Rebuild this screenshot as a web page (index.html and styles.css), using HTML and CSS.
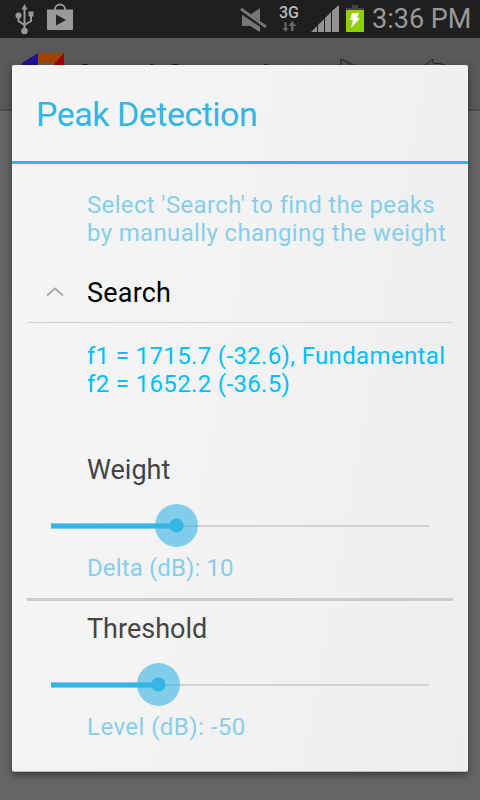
FILE: index.html
```
<!DOCTYPE html>
<html lang="en">
<head>
<meta charset="utf-8">
<title>Peak Detection</title>
<link rel="stylesheet" href="styles.css">
</head>
<body>
<header class="status">
  <svg class="usb" width="20" height="32" viewBox="0 0 20 32"><g fill="none" stroke="#999" stroke-width="2"><path d="M9.500 6v21M3.500 12v6l6 4M16 11v7l-6.500 4"/></g><g fill="#999"><path d="M9.500 1l3 5.500h-6z"/><circle cx="3.500" cy="12.500" r="3"/><path d="M13.500 8.500h5v5h-5z"/><circle cx="9.500" cy="28" r="3.300"/></g></svg>
  <svg class="play" width="26" height="28" viewBox="0 0 26 28"><path d="M8 7V6a5 4.500 0 0 1 10 0v1" fill="none" stroke="#999" stroke-width="1.800"/><path d="M0 6.500h26v19.500q0 1-1 1H1q-1 0-1-1z" fill="#999"/><path d="M9 11.500v11l10-5.500z" fill="#222"/></svg>
  <svg class="mute" width="28" height="26" viewBox="0 0 28 26"><path d="M2 8h8l10-7v24L10 19H2z" fill="#777"/><path d="M1 4l25 17" stroke="#1f1f1f" stroke-width="5"/><path d="M1 2l25 18" stroke="#777" stroke-width="2.800"/></svg>
  <div class="net"><span>3G</span><svg width="16" height="12" viewBox="0 0 16 12"><path d="M3.500 1h2v6h2l-3 4-3-4h2zM10 10h2.500V5h2.500l-3.800-5L7.500 5H10z" fill="#666"/></svg></div>
  <svg class="signal" width="28" height="27" viewBox="0 0 28 27"><path d="M0 27L6 21v6zM7 20l6-6v13H7zM14 13l6-6V27h-6zM21 6L28 0v27h-7z" fill="#929292"/></svg>
  <svg class="battery" width="18" height="27" viewBox="0 0 18 27"><path d="M6 0h6v3h6v2H0V3h6z" fill="#444"/><path d="M0 5h18v22H0z" fill="#90d000"/><path d="M6 8h7l-2 5h3L5 23l2-8H4z" fill="#fff"/></svg>
  <span class="clock">3:36 PM</span>
</header>
<div class="appbar">
  <svg class="logo" width="42" height="42" viewBox="0 0 42 42"><path d="M0 10L16 0v42H0z" fill="#22148e"/><path d="M16 0h26l-9 10H16z" fill="#a14300"/><path d="M42 0v42l-9-9V10z" fill="#a00000"/><path d="M16 10h17v23H16z" fill="#646464"/></svg>
  <span class="app-title">Sound Spectral</span>
  <svg class="run" width="24" height="30" viewBox="0 0 24 30"><path d="M2 2l22 11L2 26z" fill="none" stroke="#393939" stroke-width="2" stroke-linejoin="round"/></svg>
  <svg class="undo" width="34" height="24" viewBox="0 0 34 24"><path d="M10 1L1 8l9 8v-5q15-3 20 9 0-15-20-15z" fill="none" stroke="#252525" stroke-width="1"/></svg>
</div>
<main class="dialog">
  <h1><span class="t">Peak Detection</span></h1>
  <div class="body">
    <p class="hint"><span class="t">Select 'Search' to find the peaks</span><br><span class="t">by manually changing the weight</span></p>
    <div class="search"><svg width="18" height="10" viewBox="0 0 18 10"><path d="M1 8.500L9 1.500l8 7" fill="none" stroke="#aaa" stroke-width="2"/></svg><span class="t">Search</span></div>
    <p class="peaks"><span class="t">f1 = 1715.7 (-32.6), Fundamental</span><br><span class="t">f2 = 1652.2 (-36.5)</span></p>
    <section class="setting weight">
      <h2><span class="t">Weight</span></h2>
      <div class="slider"><i class="fill"></i><i class="thumb"></i></div>
      <p><span class="t">Delta (dB): 10</span></p>
    </section>
    <section class="setting threshold">
      <h2><span class="t">Threshold</span></h2>
      <div class="slider"><i class="fill"></i><i class="thumb"></i></div>
      <p><span class="t">Level (dB): -50</span></p>
    </section>
  </div>
</main>
</body>
</html>
```
FILE: styles.css
```
* { box-sizing: border-box; }
body { margin: 0; width: 480px; height: 800px; overflow: hidden; background: #666; font-family: Roboto, sans-serif; }
h1, h2, p { margin: 0; font-weight: 400; }
.t { display: inline-block; white-space: nowrap; }
.status { display: flex; height: 38px; background: #1f1f1f; align-items: flex-start; padding-left: 15px; }
.usb { margin-top: 3px; }
.play { margin: 3px 0 0 12px; }
.mute { margin: 7px 0 0 167px; }
.net { width: 22px; margin: 5px 0 0 10px; color: #bbb; font: 500 16px/16px Roboto, sans-serif; display: flex; flex-direction: column; align-items: center; }
.signal { margin: 5px 0 0 11px; }
.battery { margin: 5px 0 0 7px; }
.clock { margin: 4px 0 0 8px; color: #999; font-size: 27px; line-height: 30px; white-space: nowrap; }
.appbar { display: flex; height: 73px; background: #595959; border-bottom: 2px solid #4d4d4d; padding-left: 22px; }
.logo { margin-top: 15px; }
.app-title { margin: 21px 0 0 13px; width: 230px; font-size: 26px; line-height: 30px; letter-spacing: 1px; word-spacing: 4px; color: #111; }
.run { margin-top: 19px; margin-left: 32px; }
.undo { margin: 20px 0 0 60px; }
.dialog { position: absolute; left: 12px; top: 65px; width: 456px; height: 707px; border-radius: 2px; background: linear-gradient(100deg, #f5f5f5, #f3f3f3 45%, #eee); box-shadow: 0 3px 9px rgba(0,0,0,.45); border-bottom: 1px solid #b9bbb9; }
h1 { height: 99px; border-bottom: 3px solid #33b5e5; padding: 29px 0 0 24px; font-size: 34px; line-height: 40px; letter-spacing: -.5px; color: #33b5e5; }
.body { padding: 0 15px; }
.hint, .peaks { font-size: 24px; line-height: 28px; letter-spacing: .35px; padding-left: 60px; }
.hint { padding-top: 27px; height: 100px; color: #87ceeb; }
.search { display: flex; align-items: center; height: 59px; border-bottom: 1px solid #d5d5d5; padding-left: 20px; font-size: 27px; letter-spacing: .2px; color: #000; }
.search svg { margin: 0 23px 3px -1px; }
.peaks { padding-top: 19px; height: 118px; color: #00bfff; }
.setting { padding-left: 60px; }
.weight { height: 160px; border-bottom: 3px solid #ccc; }
h2 { padding-top: 13px; height: 44px; font-size: 27px; line-height: 32px; color: #444; }
.threshold h2 { padding-top: 12px; height: 43px; }
.slider { position: relative; height: 44px; width: 378px; margin: 19px 0 0 -36px; background: linear-gradient(#d2d2d2, #d2d2d2) 0 50% / 100% 2px no-repeat; }
.fill { position: absolute; left: 0; top: 19px; height: 6px; background: linear-gradient(#7dcfee 1px, #33b5e5 1px 5px, #7dcfee 5px); }
.thumb { position: absolute; top: 0; width: 43px; height: 43px; border-radius: 50%; background: radial-gradient(circle, #33b5e5 6.5px, rgba(51,181,229,.6) 7.500px); }
.weight .fill { width: 126px; }
.weight .thumb { left: 104px; }
.threshold .fill { width: 108px; }
.threshold .thumb { left: 86px; }
.setting p { padding-top: 6px; color: #87ceeb; font-size: 24px; line-height: 28px; letter-spacing: .12px; }
.threshold p { letter-spacing: .45px; }
```
